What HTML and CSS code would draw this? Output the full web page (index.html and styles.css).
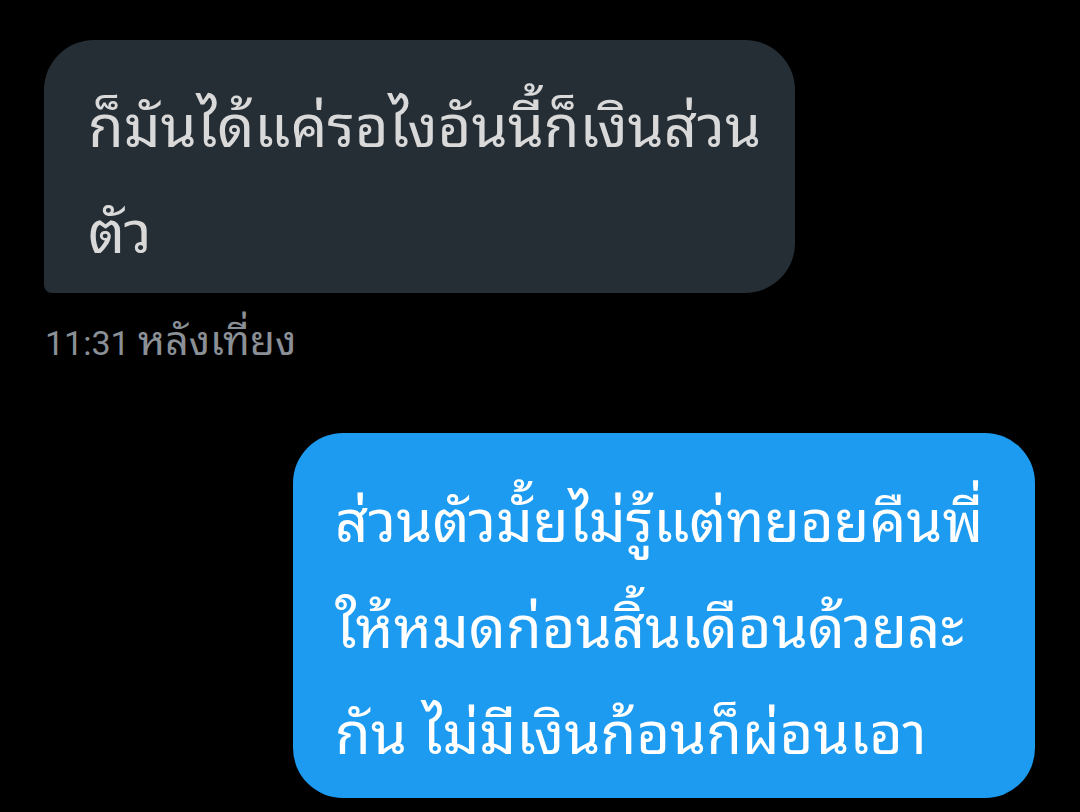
FILE: index.html
```html
<!DOCTYPE html>
<html lang="th">
<head>
<meta charset="utf-8">
<link rel="stylesheet" href="styles.css">
</head>
<body>
<div class="chat">
  <div class="msg msg-in">
    <div class="bubble bubble-in">ก็มันได้แค่รอไงอันนี้ก็เงินส่วน<br>ตัว</div>
    <div class="time">11:31 <span class="time-th">หลังเที่ยง</span></div>
  </div>
  <div class="msg msg-out">
    <div class="bubble bubble-out">ส่วนตัวมั้ยไม่รู้แต่ทยอยคืนพี่<br>ให้หมดก่อนสิ้นเดือนด้วยละ<br>กัน ไม่มีเงินก้อนก็ผ่อนเอา</div>
  </div>
</div>
</body>
</html>
```

FILE: styles.css
```css
html, body {
  margin: 0;
  padding: 0;
  background: #000000;
  width: 1080px;
  height: 812px;
  overflow: hidden;
}

.chat {
  display: flex;
  flex-direction: column;
  padding: 40px 45px 0 44px;
  font-family: "Noto Sans Thai Looped", "Noto Sans Thai", "Noto Sans", sans-serif;
}

.msg {
  display: flex;
  flex-direction: column;
}

.msg-in {
  align-items: flex-start;
}

.msg-out {
  align-items: flex-end;
  margin-top: 70px;
}

.bubble {
  font-size: 58px;
  line-height: 106px;
  white-space: nowrap;
}

.bubble-in {
  width: 707px;
  background: #252e35;
  color: #d9d9d9;
  padding: 28px 0 13px 44px;
  border-radius: 50px 50px 50px 8px;
}

.bubble-out {
  width: 700px;
  background: #1d9bf0;
  color: #ffffff;
  padding: 30px 0 17px 42px;
  border-radius: 50px;
}

.time {
  margin-top: 28px;
  margin-left: 1px;
  font-family: "Roboto", "Noto Sans Thai Looped", "Noto Sans Thai", sans-serif;
  font-size: 34px;
  line-height: 40px;
  color: #8b9097;
}

.time-th {
  font-size: 41px;
}
```
